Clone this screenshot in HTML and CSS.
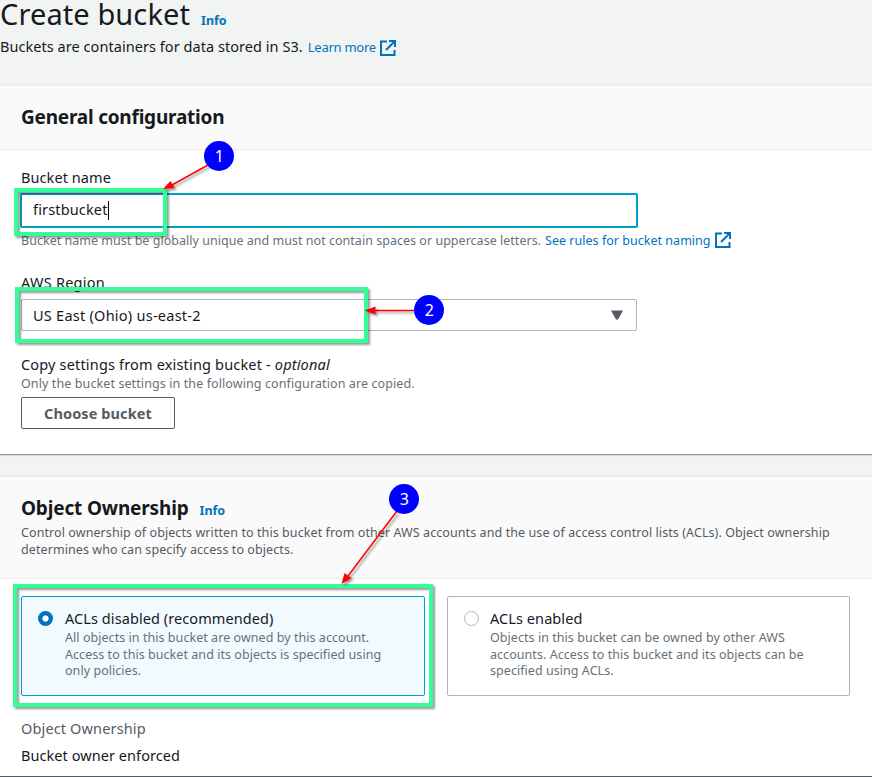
FILE: index.html
```
<!DOCTYPE html>
<html lang="en">
<head>
<meta charset="utf-8">
<title>Create bucket</title>
<link rel="stylesheet" href="styles.css">
</head>
<body>
<svg class="defs" width="0" height="0" aria-hidden="true">
  <symbol id="external" viewBox="0 0 16 16">
    <path d="M7 1.500H1V15H14.500V10M9 1h6v6M14.500 1.500L6 10" fill="none" stroke="currentColor" stroke-width="2"/>
  </symbol>
</svg>
<header class="page-head">
  <div class="title-row"><h1>Create bucket</h1><a class="info">Info</a></div>
  <p class="intro"><span>Buckets are containers for data stored in S3.</span><a class="learn">Learn more</a><svg class="ext"><use href="#external"/></svg></p>
</header>

<section class="panel general">
  <div class="panel-head"><h2>General configuration</h2></div>
  <div class="panel-body">
    <label class="label">Bucket name</label>
    <div class="input"><span class="value">firstbucket</span><span class="caret"></span></div>
    <p class="hint name-hint"><span>Bucket name must be globally unique and must not contain spaces or uppercase letters.</span><a class="rules">See rules for bucket naming</a><svg class="ext"><use href="#external"/></svg></p>
    <label class="label region-label">AWS Region</label>
    <div class="select"><span>US East (Ohio) us-east-2</span><svg width="12" height="10"><path d="M0 .5h12L7 9.500H5z" fill="#545b64"/></svg></div>
    <p class="label copy-label">Copy settings from existing bucket - <i>optional</i></p>
    <p class="hint copy-hint">Only the bucket settings in the following configuration are copied.</p>
    <button class="button">Choose bucket</button>
  </div>
</section>

<section class="panel ownership">
  <div class="panel-head">
    <div class="head-row"><h2>Object Ownership</h2><a class="info">Info</a></div>
    <p class="desc">Control ownership of objects written to this bucket from other AWS accounts and the use of access control lists (ACLs). Object ownership<br>determines who can specify access to objects.</p>
  </div>
  <div class="panel-body">
    <div class="tiles">
      <div class="tile selected"><span class="radio"></span><div><p class="label">ACLs disabled (recommended)</p><p class="tile-desc">All objects in this bucket are owned by this account.<br>Access to this bucket and its objects is specified using<br>only policies.</p></div></div>
      <div class="tile"><span class="radio"></span><div><p class="label">ACLs enabled</p><p class="tile-desc">Objects in this bucket can be owned by other AWS<br>accounts. Access to this bucket and its objects can be<br>specified using ACLs.</p></div></div>
    </div>
    <p class="label key">Object Ownership</p>
    <p class="label enforced">Bucket owner enforced</p>
  </div>
</section>

<div class="mark mark-name"></div>
<div class="mark mark-region"></div>
<div class="mark mark-acl"></div>
<svg class="arrows" width="872" height="777" aria-hidden="true">
  <g stroke="#f00" stroke-width="1.5" fill="#f00">
    <path d="M208 165L172 185"/><path stroke="none" d="M163 189L170.500 181L174.500 188Z"/>
    <path d="M415 310.500H374"/><path stroke="none" d="M364.500 310.500L375.500 306.500V314.500Z"/>
    <path d="M397 511L348 576"/><path stroke="none" d="M341.500 584L344.500 573L351.500 578Z"/>
  </g>
</svg>
<div class="pin pin-1">1</div>
<div class="pin pin-2">2</div>
<div class="pin pin-3">3</div>
</body>
</html>
```
FILE: styles.css
```
* { box-sizing: border-box; }
body {
  margin: 0;
  width: 872px;
  height: 777px;
  overflow: hidden;
  position: relative;
  background: #f2f3f3;
  color: #16191f;
  font: 14.5px/22px "Noto Sans", "Open Sans", sans-serif;
  letter-spacing: 0.08px;
  white-space: nowrap;
}
h1, h2, p { margin: 0; }
.defs { position: absolute; }
a { color: #0073bb; }
.page-head { height: 84px; }
.title-row { display: flex; align-items: baseline; height: 32px; gap: 11px; }
h1 { font-size: 29px; line-height: 28px; font-weight: 400; letter-spacing: 0.1px; }
.info { font-size: 12.5px; line-height: 22px; font-weight: 700; letter-spacing: 0; }
.intro { display: flex; margin-top: 3px; letter-spacing: 0.05px; }
.intro .learn { margin-left: 5px; font-size: 13px; line-height: 24px; letter-spacing: -0.25px; }
.ext { width: 16px; height: 16px; color: #0073bb; margin: 5px 0 0 4px; }
.panel { background: #fff; border-top: 2px solid #eaeded; }
.panel-head { background: #fafafa; border-bottom: 1px solid #eaeded; padding-left: 21px; }
.panel-body { padding-left: 21px; }
h2 { font-size: 19px; line-height: 24px; font-weight: 700; letter-spacing: -0.22px; }
.general { height: 371px; border-bottom: 1px solid #879596; box-shadow: 0 1px 1px #d5dbdb; }
.general .panel-head { height: 64px; padding-top: 19px; }
.general .panel-body { padding-top: 17px; }
.label { display: block; height: 22px; line-height: 20px; }
.input {
  display: flex;
  align-items: center;
  width: 618px;
  height: 35px;
  margin: 4px 0 0 -1px;
  padding-left: 11px;
  border: 2px solid #00a1c9;
  border-radius: 2px;
}
.value { height: 23px; line-height: 21px; letter-spacing: 0.15px; }
.caret { width: 1px; height: 19px; background: #000; }
.hint { display: flex; font-size: 12.5px; line-height: 17px; height: 17px; color: #687078; letter-spacing: 0.025px; }
.name-hint { margin-top: 4px; }
.rules { margin-left: 4px; }
.hint .ext { margin-top: 0; }
.region-label { margin-top: 23px; letter-spacing: 0.25px; }
.select {
  display: flex;
  align-items: center;
  justify-content: space-between;
  width: 616px;
  height: 32px;
  margin-top: 5px;
  padding: 0 13px 0 11px;
  border: 1px solid #aab7b8;
  border-radius: 2px;
  letter-spacing: 0.25px;
}
.copy-label { margin-top: 23px; letter-spacing: 0.17px; }
.copy-hint { margin-top: -1px; letter-spacing: 0.1px; }
.button {
  display: block;
  width: 154px;
  height: 32px;
  margin-top: 5px;
  padding: 0;
  border: 1px solid #545b64;
  border-radius: 2px;
  background: #fff;
  color: #545b64;
  font: 700 14.5px/22px "Noto Sans", "Open Sans", sans-serif;
  letter-spacing: 0.1px;
}
.ownership { margin-top: 20px; height: 302px; border-bottom: 1px solid #545b64; }
.ownership .panel-head { height: 102px; padding-top: 19px; }
.head-row { display: flex; align-items: baseline; gap: 11px; height: 24px; }
.head-row h2 { letter-spacing: -0.16px; }
.desc { margin-top: 4px; font-size: 12.5px; line-height: 17px; color: #545b64; letter-spacing: 0.085px; }
.tiles { display: flex; gap: 22px; padding-top: 17px; }
.tile { display: flex; gap: 11px; width: 403px; height: 100px; padding: 11px 0 0 16px; border: 1px solid #aab7b8; border-radius: 2px; }
.tile.selected { gap: 12px; width: 404px; background: #f1faff; border-color: #00a1c9; }
.radio { width: 15px; height: 15px; margin-top: 3px; border: 1px solid #aab7b8; border-radius: 50%; background: #fff; }
.selected .radio { border: 0; background: radial-gradient(circle, #fff 2.7px, #0073bb 3.5px); }
.tile-desc { font-size: 12.5px; line-height: 16.5px; color: #687078; letter-spacing: 0.05px; }
.key { margin-top: 22px; color: #545b64; letter-spacing: 0.14px; }
.enforced { margin-top: 5px; letter-spacing: 0.06px; }
.mark { position: absolute; border: 4px solid #3f9; filter: drop-shadow(2px 2px 1px rgba(0,0,0,.4)); }
.mark-name { left: 14px; top: 188px; width: 153px; height: 48px; }
.mark-region { left: 15px; top: 287px; width: 353px; height: 56px; }
.mark-acl { left: 13px; top: 584px; width: 420px; height: 123px; }
.arrows { position: absolute; left: 0; top: 0; filter: drop-shadow(2px 2px 1px rgba(0,0,0,.4)); }
.pin { position: absolute; width: 30px; height: 30px; border-radius: 50%; background: #00f; color: #fff; text-align: center; font: 16px/30px "Noto Sans", sans-serif; }
.pin-1 { left: 204.4px; top: 141.4px; }
.pin-2 { left: 414.4px; top: 295.4px; }
.pin-3 { left: 389.4px; top: 484px; }
```
